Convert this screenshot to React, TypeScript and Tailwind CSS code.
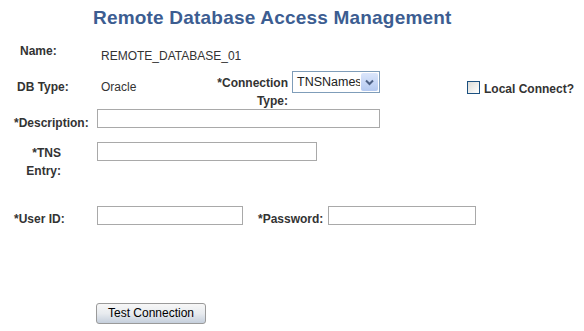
import React from 'react';

const labelCls = 'font-bold text-[12px] leading-[14px] text-[#333333]';
const valueCls = 'text-[12px] leading-[14px] text-[#333333]';
const inputCls = 'h-[19px] border border-[#a9a9a9] bg-white';

const App: React.FC = () => {
  return (
    <div className="w-[584px] h-[331px] bg-white overflow-hidden font-['Liberation_Sans',Arial,sans-serif]">
      {/* Title */}
      <h1 className="pt-[7px] pl-[93px] text-[19px] leading-[22px] tracking-[0.2px] font-bold text-[#3c5d91] whitespace-nowrap">
        Remote Database Access Management
      </h1>

      {/* Name */}
      <div className="mt-[15px] h-[27px] flex items-start">
        <div className={`w-[101px] pl-[20px] ${labelCls}`}>Name:</div>
        <div className={`pt-[5px] ${valueCls}`}>REMOTE_DATABASE_01</div>
      </div>

      {/* DB type / connection type / local connect */}
      <div className="h-[38px] flex items-start">
        <div className={`w-[101px] pl-[17px] pt-[9px] ${labelCls}`}>DB Type:</div>
        <div className={`w-[99px] pt-[9px] ${valueCls}`}>Oracle</div>
        <div className="w-[88px] pt-[3px] text-right font-bold text-[12px] leading-[18px] text-[#333333]">
          *Connection
          <br />
          Type:
        </div>
        <div className="ml-[4px] w-[88px] h-[22px] border border-[#7f9db9] bg-white flex items-stretch">
          <div className="flex-1 overflow-hidden whitespace-nowrap pl-[4px] text-[12.5px] leading-[20px] text-[#222]">
            TNSNames
          </div>
          <div className="w-[17px] m-[1px] rounded-[2px] bg-gradient-to-b from-[#dbe6fb] to-[#b4c9f0] flex items-center justify-center">
            <svg width="9" height="7" viewBox="0 0 9 7">
              <path d="M1 1.5 L4.5 5 L8 1.5" fill="none" stroke="#4d6185" strokeWidth="2" />
            </svg>
          </div>
        </div>
        <div className="ml-[87px] mt-[10px] w-[13px] h-[13px] border border-[#1c5180] bg-gradient-to-br from-[#dcdcd7] to-white" />
        <div className={`ml-[4px] pt-[11px] ${labelCls}`}>Local Connect?</div>
      </div>

      {/* Description */}
      <div className="h-[19px] flex items-start">
        <div className={`w-[97px] pl-[14px] pt-[7px] ${labelCls}`}>*Description:</div>
        <div className={`w-[283px] ${inputCls}`} />
      </div>

      {/* TNS Entry */}
      <div className="mt-[14px] h-[64px] flex items-start">
        <div className="w-[61px] pt-[2px] text-right font-bold text-[12px] leading-[18px] text-[#333333]">
          *TNS
          <br />
          Entry:
        </div>
        <div className={`ml-[36px] w-[220px] ${inputCls}`} />
      </div>

      {/* User ID / Password */}
      <div className="h-[19px] flex items-start">
        <div className={`w-[97px] pl-[14px] pt-[6px] ${labelCls}`}>*User ID:</div>
        <div className={`w-[146px] ${inputCls}`} />
        <div className={`ml-[15px] pt-[6px] w-[70px] ${labelCls}`}>*Password:</div>
        <div className={`w-[148px] ${inputCls}`} />
      </div>

      {/* Test connection */}
      <div className="mt-[75px] pl-[96px]">
        <button className="w-[110px] h-[21px] rounded-[3px] border border-[#9a9a9a] bg-gradient-to-b from-[#f7f7f7] via-[#e8ebef] to-[#c5cfdc] text-[12px] leading-[19px] text-black">
          Test Connection
        </button>
      </div>
    </div>
  );
};

export default App;
